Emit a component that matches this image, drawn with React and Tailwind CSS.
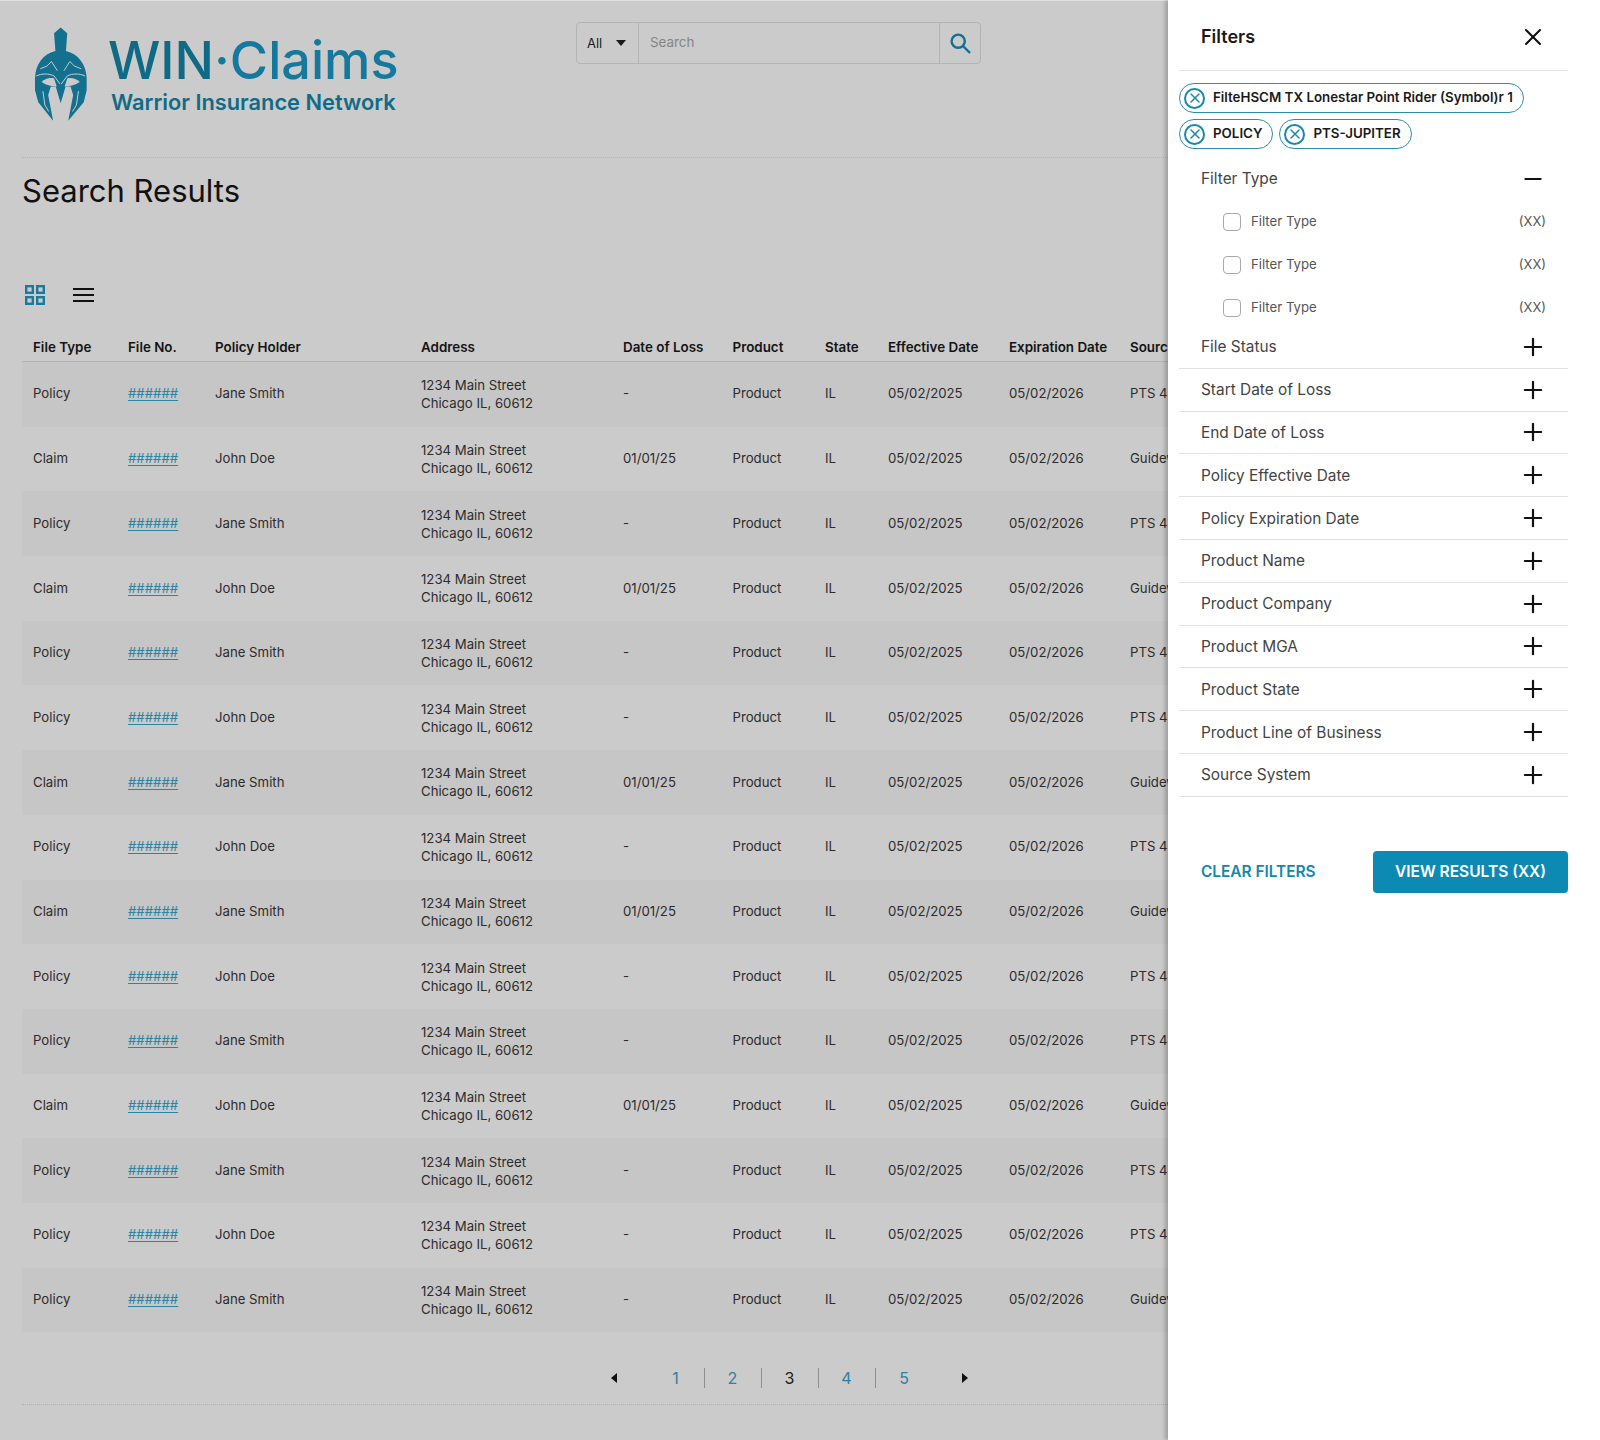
import React from "react";
import { Minus, Plus, X } from "lucide-react";

const columns =
  "grid grid-cols-[95px_87px_206px_202px_109.5px_92.5px_63px_121px_121px_180px] items-center";

const rows = [
  ["Policy", "Jane Smith", "-", "PTS 4.0"],
  ["Claim", "John Doe", "01/01/25", "Guidewire"],
  ["Policy", "Jane Smith", "-", "PTS 4.0"],
  ["Claim", "John Doe", "01/01/25", "Guidewire"],
  ["Policy", "Jane Smith", "-", "PTS 4.0"],
  ["Policy", "John Doe", "-", "PTS 4.0"],
  ["Claim", "Jane Smith", "01/01/25", "Guidewire"],
  ["Policy", "John Doe", "-", "PTS 4.0"],
  ["Claim", "Jane Smith", "01/01/25", "Guidewire"],
  ["Policy", "John Doe", "-", "PTS 4.0"],
  ["Policy", "Jane Smith", "-", "PTS 4.0"],
  ["Claim", "John Doe", "01/01/25", "Guidewire"],
  ["Policy", "Jane Smith", "-", "PTS 4.0"],
  ["Policy", "John Doe", "-", "PTS 4.0"],
  ["Policy", "Jane Smith", "-", "Guidewire"],
];

const headers = [
  "File Type",
  "File No.",
  "Policy Holder",
  "Address",
  "Date of Loss",
  "Product",
  "State",
  "Effective Date",
  "Expiration Date",
  "Source System",
];

const filterGroups = [
  "File Status",
  "Start Date of Loss",
  "End Date of Loss",
  "Policy Effective Date",
  "Policy Expiration Date",
  "Product Name",
  "Product Company",
  "Product MGA",
  "Product State",
  "Product Line of Business",
  "Source System",
];

const Helmet = () => (
  <svg viewBox="42 35 158 285" className="w-[52px] h-[95px] shrink-0">
    <path
      fill="#14708f"
      d="M120 35 L140 52 L136 106 C174 114 198 148 199 190 L199 225 L190 262 L143 318 L158 240 L150 214 L135 214 L120 265 L105 214 L90 214 L82 240 L97 318 L52 262 L42 225 L42 190 C43 148 66 114 104 106 L100 52 Z"
    />
    <g fill="#cbcbcb">
      <path d="M62 200 C72 190 90 186 100 190 L108 214 L88 212 L74 207 Z" />
      <path d="M178 200 C168 190 150 186 140 190 L132 214 L152 212 L166 207 Z" />
    </g>
    <g fill="none" stroke="#cbcbcb" strokeWidth="3">
      <path d="M46 182 C62 174 85 174 100 182 L118 206" />
      <path d="M194 182 C178 174 155 174 140 182 L122 206" />
      <path d="M58 160 L78 152 L92 138 L110 166" />
      <path d="M182 160 L162 152 L148 138 L130 166" />
      <path d="M66 228 L72 270 L84 290" />
      <path d="M174 228 L168 270 L156 290" />
    </g>
  </svg>
);

const Logo = () => (
  <div className="flex w-[554px] shrink-0 pl-[13px] pt-[26px]">
    <Helmet />
    <div className="ml-[21px]">
      <div className="mt-[3px] h-[60px] text-[52.2px] font-medium leading-[60px] whitespace-nowrap">
        <span className="text-[#0f6a85]">WIN</span>
        <span className="text-[#14799c]">·Claims</span>
      </div>
      <div className="ml-[3px] -mt-[1px] text-[21.8px] font-semibold leading-[26px] text-[#116b86] whitespace-nowrap">
        Warrior Insurance Network
      </div>
    </div>
  </div>
);

const SearchBar = () => (
  <div className="mt-[21px] flex h-[42px] w-[405px] rounded border border-[#b4b4b4] text-sm">
    <div className="flex w-[62px] items-center justify-between border-r border-[#b4b4b4] pl-[10px] pr-[12px] text-[13px] text-[#1a1a1a]">
      <span>All</span>
      <svg viewBox="0 0 10 6" className="h-[6px] w-[10px]">
        <path d="M0 0 H10 L5 6 Z" fill="#1a1a1a" />
      </svg>
    </div>
    <div className="flex flex-1 items-center pl-[11px] text-[13.4px] text-[#858585]">Search</div>
    <div className="flex w-[41px] items-center justify-center border-l border-[#b4b4b4]">
      <svg viewBox="0 0 21 21" className="h-[21px] w-[21px]" fill="none" stroke="#14708f" strokeWidth="2.4">
        <circle cx="8.2" cy="8.2" r="6.6" />
        <path d="M13 13 L20 20" />
      </svg>
    </div>
  </div>
);

const ViewToggles = () => (
  <div className="mt-[72px] flex h-[24px] items-center gap-[28px] pl-[3px]">
    <svg viewBox="0 0 20 20" className="h-[20px] w-[20px]" fill="none" stroke="#1b7a9b" strokeWidth="2.4">
      <rect x="1.2" y="1.2" width="6.6" height="6.6" />
      <rect x="12.2" y="1.2" width="6.6" height="6.6" />
      <rect x="1.2" y="12.2" width="6.6" height="6.6" />
      <rect x="12.2" y="12.2" width="6.6" height="6.6" />
    </svg>
    <svg viewBox="0 0 21 16" className="h-[16px] w-[21px]" fill="none" stroke="#111" strokeWidth="2">
      <path d="M0 2 H21 M0 8 H21 M0 14 H21" />
    </svg>
  </div>
);

const ResultsTable = () => (
  <div className="mt-[27px] w-[1300px] text-[13.2px]">
    <div className={`${columns} h-[28px] border-b border-[#b2b2b2] text-[13.4px] font-semibold text-[#141414]`}>
      {headers.map((h) => (
        <div key={h} className="pl-[11px] pb-[1px] whitespace-nowrap">
          {h}
        </div>
      ))}
    </div>
    {rows.map((row, i) => (
      <div
        key={i}
        className={`${columns} h-[64.7px] text-[#2b2b2b] ${i % 2 === 0 ? "bg-[#c6c6c6]" : ""}`}
      >
        <div className="pl-[11px]">{row[0]}</div>
        <div className="pl-[11px]">
          <a className="text-[#2a84a3] underline underline-offset-2">######</a>
        </div>
        <div className="pl-[11px]">{row[1]}</div>
        <div className="pl-[11px] leading-[18px]">
          1234 Main Street
          <br />
          Chicago IL, 60612
        </div>
        <div className="pl-[11px]">{row[2]}</div>
        <div className="pl-[11px]">Product</div>
        <div className="pl-[11px]">IL</div>
        <div className="pl-[11px]">05/02/2025</div>
        <div className="pl-[11px]">05/02/2026</div>
        <div className="pl-[11px] whitespace-nowrap">{row[3]}</div>
      </div>
    ))}
  </div>
);

const Pagination = () => (
  <div className="mt-[34px] flex h-[24px] items-center pl-[589px] text-base">
    <svg viewBox="0 0 6 10" className="h-[10px] w-[6px]">
      <path d="M6 0 V10 L0 5 Z" fill="#111" />
    </svg>
    <div className="ml-[30.5px] flex">
      {[1, 2, 3, 4, 5].map((n) => (
        <div
          key={n}
          className={`flex h-[20px] w-[57px] items-center justify-center leading-none ${
            n === 3 ? "text-[#1a1a1a]" : "text-[#2f7f9f]"
          } ${n < 5 ? "border-r border-[#8e8e8e]" : ""}`}
        >
          {n}
        </div>
      ))}
    </div>
    <svg viewBox="0 0 6 10" className="ml-[29.5px] h-[10px] w-[6px]">
      <path d="M0 0 V10 L6 5 Z" fill="#111" />
    </svg>
  </div>
);

const Chip = ({ children }) => (
  <div className="flex h-[30px] items-center gap-[8px] rounded-full border border-[#2c8cab] pl-[4px] pr-[10px] text-[13.35px] font-semibold leading-none whitespace-nowrap text-[#1a1a1a]">
    <span className="flex h-[21px] w-[21px] items-center justify-center rounded-full border-2 border-[#1b88ab]">
      <X size={16} strokeWidth={2.2} className="text-[#1b88ab]" />
    </span>
    {children}
  </div>
);

const FilterOption = () => (
  <div className="flex h-[43px] items-center pl-[44px] pr-[22px]">
    <span className="h-[18px] w-[18px] rounded-[4px] border-[1.5px] border-[#a9a9a9]" />
    <span className="ml-[10px] flex-1 text-[13.2px] text-[#555]">Filter Type</span>
    <span className="text-[13px] text-[#555]">(XX)</span>
  </div>
);

const FiltersPanel = () => (
  <aside className="relative z-10 h-full w-[432px] shrink-0 bg-white pl-[11px] pr-[32px] shadow-[-3px_0_4px_rgba(0,0,0,0.22)]">
    <div className="flex h-[71px] items-center justify-between border-b border-[#e4e4e4] pl-[22px] pr-[21px] pt-[3px]">
      <h2 className="text-lg font-semibold text-[#1a1a1a]">Filters</h2>
      <X size={28} strokeWidth={1.8} className="text-[#111]" />
    </div>
    <div className="mt-[12px] flex flex-col gap-[6px]">
      <div className="flex">
        <Chip>FilteHSCM TX Lonestar Point Rider (Symbol)r 1</Chip>
      </div>
      <div className="flex gap-[6px]">
        <Chip>POLICY</Chip>
        <Chip>PTS-JUPITER</Chip>
      </div>
    </div>
    <div className="mt-[8px] flex h-[43px] items-center justify-between pl-[22px] pr-[22px] text-[15.4px] text-[#444]">
      <span>Filter Type</span>
      <Minus size={26} strokeWidth={2} className="text-[#111]" />
    </div>
    <FilterOption />
    <FilterOption />
    <FilterOption />
    <div className="-mt-[3px]">
      {filterGroups.map((g) => (
        <div
          key={g}
          className="flex h-[42.8px] items-center justify-between border-b border-[#e2e2e2] pl-[22px] pr-[21px] text-[15.4px] text-[#444]"
        >
          <span>{g}</span>
          <Plus size={28} strokeWidth={1.9} className="text-[#111]" />
        </div>
      ))}
    </div>
    <div className="mt-[54px] flex items-center justify-between pl-[22px]">
      <button className="text-[15.4px] font-semibold text-[#1189ad]">CLEAR FILTERS</button>
      <button className="h-[42px] w-[195px] rounded bg-[#0c8ab3] text-[15.5px] font-semibold text-white">
        VIEW RESULTS (XX)
      </button>
    </div>
  </aside>
);

export default function App() {
  return (
    <div className="flex h-[1440px] w-[1600px] overflow-hidden bg-[#cbcbcb] font-['Inter',sans-serif]">
      <main className="h-full min-w-0 flex-1 overflow-hidden border-t border-[#e0e0e0] pl-[22px]">
        <div className="flex h-[157px] border-b border-dotted border-[#b8b8b8]">
          <Logo />
          <SearchBar />
        </div>
        <h1 className="mt-[13px] text-[31px] leading-[40px] text-[#111]">Search Results</h1>
        <ViewToggles />
        <ResultsTable />
        <Pagination />
        <div className="mt-[14px] border-b border-dotted border-[#b0b0b0]" />
      </main>
      <FiltersPanel />
    </div>
  );
}
